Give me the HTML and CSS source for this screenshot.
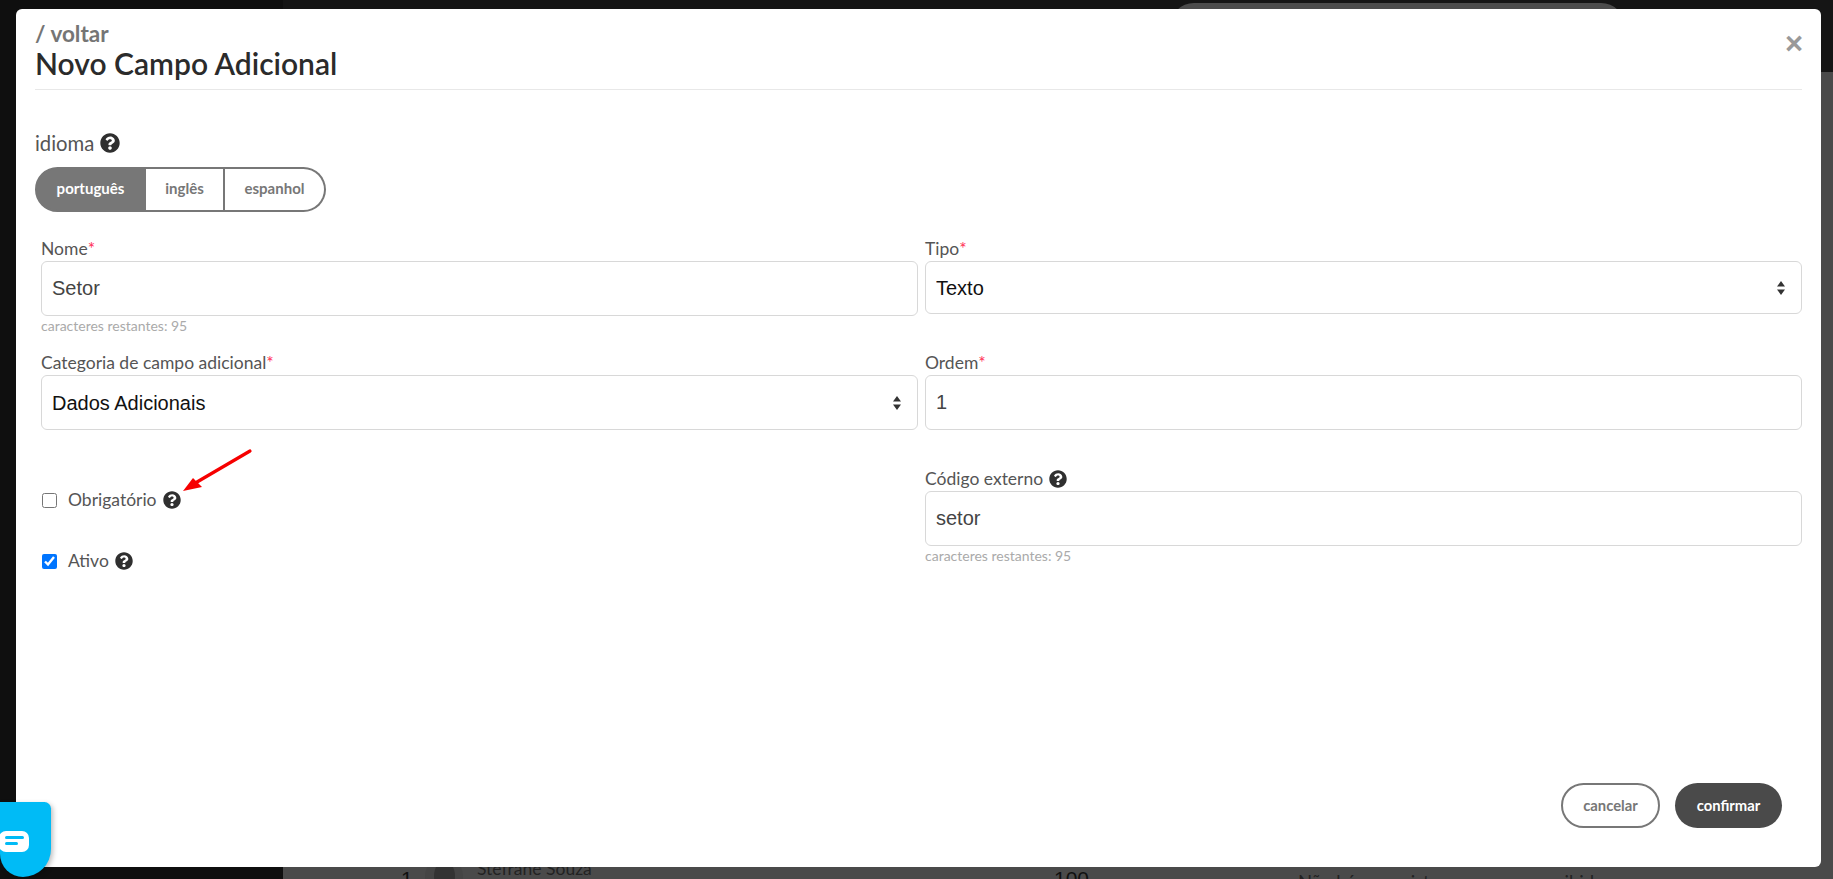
FILE: index.html
```html
<!DOCTYPE html>
<html lang="pt-BR">
<head>
<meta charset="utf-8">
<title>Novo Campo Adicional</title>
<link rel="stylesheet" href="styles.css">
</head>
<body>
<svg class="defs" width="0" height="0" aria-hidden="true">
  <symbol id="help" viewBox="0 0 512 512"><path fill="currentColor" d="M504 256c0 136.997-111.043 248-248 248S8 392.997 8 256C8 119.083 119.043 8 256 8s248 111.083 248 248zM262.655 90c-54.497 0-89.255 22.957-116.549 63.758-3.536 5.286-2.353 12.415 2.715 16.258l34.699 26.31c5.205 3.947 12.621 3.008 16.665-2.122 17.864-22.658 30.113-35.797 57.303-35.797 20.429 0 45.698 13.148 45.698 32.958 0 14.976-12.363 22.667-32.534 33.976C247.128 238.528 216 254.941 216 296v4c0 6.627 5.373 12 12 12h56c6.627 0 12-5.373 12-12v-1.333c0-28.462 83.186-29.647 83.186-106.667 0-58.002-60.165-102-116.531-102zM256 338c-25.365 0-46 20.635-46 46 0 25.364 20.635 46 46 46s46-20.636 46-46c0-25.365-20.635-46-46-46z"/></symbol>
  <symbol id="updown" viewBox="0 0 10 16"><path fill="currentColor" d="M5 1l4 5.6H1zM5 15L1 9.4h8z"/></symbol>
</svg>

<div class="backdrop">
  <aside class="side"></aside>
  <div class="main">
    <div class="topbar"><div class="search-pill"></div></div>
    <div class="content">
      <div class="row-peek">
        <span class="peek-rank">1</span>
        <span class="peek-avatar"><span class="peek-avatar-in"></span></span>
        <span class="peek-name">Stefrane Souza</span>
        <span class="peek-score">100</span>
        <span class="peek-empty">Não há conquistas para serem exibidos</span>
      </div>
    </div>
  </div>
</div>

<section class="modal">
  <header class="modal-head">
    <div class="head-text">
      <a class="back">/ voltar</a>
      <h1 class="title">Novo Campo Adicional</h1>
    </div>
    <span class="close">×</span>
  </header>

  <div class="lang">
    <div class="lang-label">idioma <svg class="help help-lg"><use href="#help"/></svg></div>
    <div class="segmented">
      <span class="seg seg-on">português</span>
      <span class="seg seg-mid">inglês</span>
      <span class="seg seg-end">espanhol</span>
    </div>
  </div>

  <div class="form-grid">
    <div class="col">
      <div class="field field-first">
        <label class="label">Nome<span class="req">*</span></label>
        <input class="control" type="text" value="Setor">
        <div class="hint">caracteres restantes: 95</div>
      </div>
      <div class="field field-cat">
        <label class="label">Categoria de campo adicional<span class="req">*</span></label>
        <div class="select-wrap">
          <select class="control control-select"><option>Dados Adicionais</option></select>
          <svg class="updown"><use href="#updown"/></svg>
        </div>
      </div>
      <div class="checks">
        <label class="check"><input type="checkbox"><span>Obrigatório</span><svg class="help"><use href="#help"/></svg></label>
        <label class="check"><input type="checkbox" checked><span>Ativo</span><svg class="help"><use href="#help"/></svg></label>
      </div>
    </div>
    <div class="col">
      <div class="field field-first">
        <label class="label">Tipo<span class="req">*</span></label>
        <div class="select-wrap">
          <select class="control control-select control-short"><option>Texto</option></select>
          <svg class="updown updown-short"><use href="#updown"/></svg>
        </div>
      </div>
      <div class="field field-ordem">
        <label class="label">Ordem<span class="req">*</span></label>
        <input class="control" type="text" value="1">
      </div>
      <div class="field">
        <label class="label">Código externo <svg class="help"><use href="#help"/></svg></label>
        <input class="control" type="text" value="setor">
        <div class="hint">caracteres restantes: 95</div>
      </div>
    </div>
  </div>

  <footer class="modal-foot">
    <button class="btn btn-ghost">cancelar</button>
    <button class="btn btn-solid">confirmar</button>
  </footer>

  <svg class="arrow" width="80" height="54" viewBox="0 0 80 54">
    <path d="M74 7 L21 38" stroke="#f60000" stroke-width="3.2" stroke-linecap="round" fill="none"/>
    <path d="M7 47 L17 34 L26 43 Z" fill="#f60000"/>
  </svg>
</section>

<div class="chat">
  <svg width="30" height="21" viewBox="0 0 30 21"><rect x="0" y="0" width="30" height="21" rx="7" fill="#fff"/><rect x="6" y="5" width="19" height="3" rx="1.5" fill="#00bbf6"/><rect x="6" y="11" width="13" height="3" rx="1.5" fill="#00bbf6"/></svg>
</div>
</body>
</html>
```
FILE: styles.css
```css
* { box-sizing: border-box; }
html, body { margin: 0; height: 100%; overflow: hidden; }
body { font-family: "Lato", "Noto Sans", sans-serif; background: #0f0f0f; color: #555; }
.defs { position: absolute; }

/* dimmed page behind the modal */
.backdrop { display: flex; height: 879px; }
.side { width: 283px; background: #0f0f0f; }
.main { flex: 1; display: flex; flex-direction: column; }
.topbar { height: 72px; background: #151515; padding: 3px 0 0 887px; }
.search-pill { width: 455px; height: 50px; background: #4c4c4c; border-radius: 24px; }
.content { flex: 1; background: #4a4a4a; display: flex; flex-direction: column; justify-content: flex-end; overflow: hidden; }
.row-peek { height: 12px; display: flex; align-items: flex-start; color: #111; font-family: "Liberation Sans", sans-serif; }
.peek-rank { margin-left: 118px; font-size: 21px; line-height: 24px; width: 24px; }
.peek-avatar { width: 38px; height: 38px; border-radius: 50%; background: #454545; margin-top: -10px; display: flex; align-items: center; justify-content: center; flex: none; }
.peek-avatar-in { width: 21px; height: 30px; border-radius: 50%; background: #333; }
.peek-name { margin-left: 14px; font-size: 17.5px; line-height: 16px; margin-top: -6px; width: 577px; color: #222; font-family: "Lato", sans-serif; }
.peek-score { font-size: 21px; line-height: 24px; width: 244px; }
.peek-empty { font-size: 18.5px; line-height: 20px; margin-top: 5px; color: #222; font-family: "Lato", sans-serif; white-space: nowrap; }

/* modal */
.modal { position: absolute; left: 16px; top: 9px; width: 1805px; height: 858px; background: #fff; border-radius: 6px; padding: 0 19px; display: flex; flex-direction: column; }
.modal-head { height: 81px; border-bottom: 1px solid #e8e8e8; display: flex; justify-content: space-between; padding-top: 13px; }
.head-text { display: flex; flex-direction: column; }
.back { font-size: 22.5px; line-height: 24px; font-weight: 700; color: #757575; }
.title { margin: 0; font-size: 30px; line-height: 34px; font-weight: 600; color: #2b2b2b; }
.close { font-family: "Liberation Sans", sans-serif; font-size: 31px; font-weight: 700; line-height: 30px; margin: 7px -1px 0 0; color: #999; }

.lang { margin-top: 39px; }
.lang-label { font-size: 20.3px; line-height: 28px; color: #555; display: flex; align-items: center; gap: 6px; }
.help { width: 18px; height: 18px; color: #2f2f2f; flex: none; }
.help-lg { width: 20px; height: 20px; }
.segmented { margin-top: 10px; display: inline-flex; height: 45px; font-size: 15px; font-weight: 700; color: #777; }
.seg { display: flex; align-items: center; justify-content: center; background: #fff; border: 2px solid #777; padding-bottom: 3px; }
.seg-on { width: 111px; background: #777; color: #fff; border-radius: 23px 0 0 23px; }
.seg-mid { width: 79px; border-width: 2px 2px 2px 0; }
.seg-end { width: 101px; border-left: 0; border-radius: 0 23px 23px 0; }

.form-grid { margin: 25px 0 0 6px; display: grid; grid-template-columns: 877px 877px; column-gap: 7px; }
.col { display: flex; flex-direction: column; }
.field { display: flex; flex-direction: column; }
.field-first { height: 114px; }
.field-cat { height: 137px; }
.field-ordem { height: 116px; }
.label { font-size: 17.5px; line-height: 24px; color: #555; display: flex; align-items: center; gap: 6px; }
.req { color: #ff2d55; margin-left: -6px; }
.control { width: 100%; height: 55px; border: 1px solid #d8d8d8; border-radius: 6px; background: #fff; padding: 0 10px; font-family: "Liberation Sans", sans-serif; font-size: 20px; color: #444; outline: none; appearance: none; }
.control-select { color: #111; }
.control-short { height: 53px; }
.select-wrap { position: relative; }
.updown { position: absolute; right: 16px; top: 20px; width: 10px; height: 16px; color: #333; }
.updown-short { top: 19px; }
.hint { font-size: 14px; line-height: 18px; color: #aaa; margin-top: 1px; }
.checks { display: flex; flex-direction: column; gap: 37px; }
.check { display: flex; align-items: center; font-size: 17.5px; line-height: 24px; color: #555; }
.check input { width: 15px; height: 15px; margin: 0 11px 0 1px; }
.check .help { margin-left: 6px; }

.modal-foot { margin-top: auto; padding: 0 20px 39px 0; display: flex; justify-content: flex-end; gap: 15px; }
.btn { height: 45px; border-radius: 23px; font-family: inherit; font-size: 14.8px; font-weight: 700; padding: 0 0 2px; }
.btn-ghost { width: 99px; background: #fff; border: 2px solid #777; color: #777; }
.btn-solid { width: 107px; background: #4a4a4a; border: 0; color: #fff; }

.arrow { position: absolute; left: 160px; top: 435px; }

.chat { position: absolute; left: 0; top: 802px; width: 51px; height: 75px; background: #00bbf6; border-radius: 0 8px 34px 28px; box-shadow: 2px 2px 5px rgba(0,0,0,.25); display: flex; align-items: flex-start; padding-top: 29px; }
.chat svg { margin-left: -1px; }
```
